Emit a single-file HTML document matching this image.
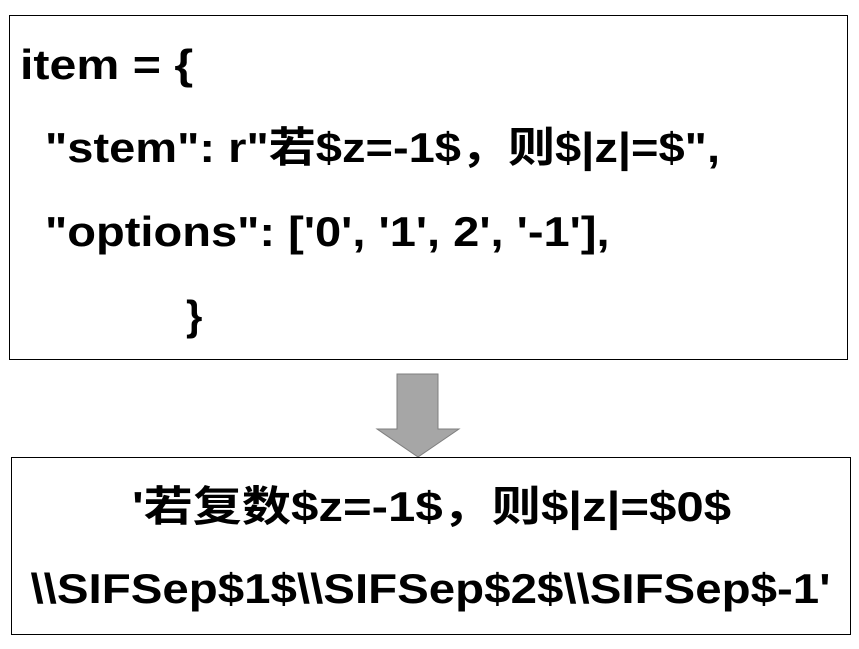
<!DOCTYPE html>
<html><head><meta charset="utf-8"><style>
body{margin:0;width:859px;height:649px;background:#fff;position:relative;overflow:hidden;font-family:"Liberation Sans","Noto Sans CJK SC",sans-serif;font-weight:bold;color:#000}
.box{position:absolute;border:1px solid #000;box-sizing:border-box}
.t{position:absolute;white-space:nowrap;font-size:42px;line-height:1;transform-origin:left center}
.c{transform-origin:center center}
</style></head><body>
<div class="box" style="left:9px;top:15px;width:839px;height:345px"></div>
<div class="t" style="left:20px;top:44px;transform:scaleX(1.15)">item = {</div>
<div class="t" style="left:45px;top:127px;transform:scaleX(1.12)">"stem": r"若$z=-1$，则$|z|=$",</div>
<div class="t" style="left:45px;top:211px;transform:scaleX(1.12)">"options": ['0', '1', 2', '-1'],</div>
<div class="t" style="left:186px;top:295px">}</div>
<svg style="position:absolute;left:0;top:0" width="859" height="649"><polygon points="397,374 438,374 438,429 459,429 418,457 377,429 397,429" fill="#a6a6a6" stroke="#7f7f7f" stroke-width="1"/></svg>
<div class="box" style="left:11px;top:457px;width:840px;height:178px"></div>
<div class="t c" style="left:0;width:863px;text-align:center;top:486px;transform:scaleX(1.17)">'若复数$z=-1$，则$|z|=$0$</div>
<div class="t c" style="left:0;width:861px;text-align:center;top:568px;transform:scaleX(1.13)">\\SIFSep$1$\\SIFSep$2$\\SIFSep$-1'</div>
</body></html>
